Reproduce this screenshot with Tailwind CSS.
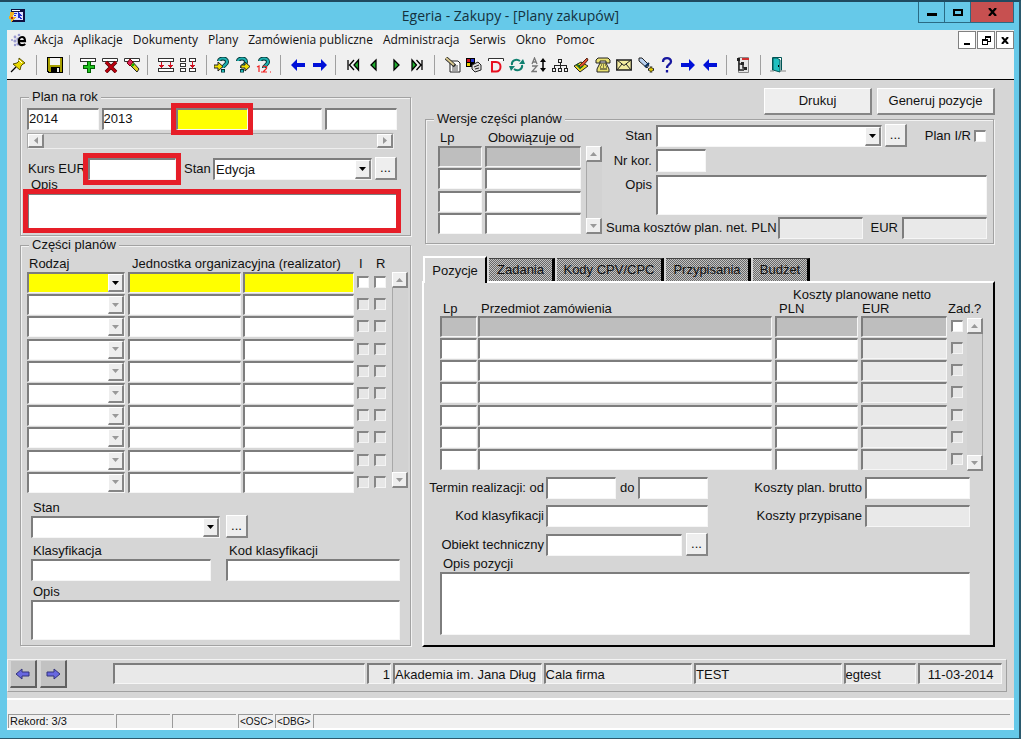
<!DOCTYPE html>
<html lang="pl">
<head>
<meta charset="utf-8">
<title>Egeria - Zakupy - [Plany zakupów]</title>
<script src="https://cdn.jsdelivr.net/npm/@tailwindcss/browser@4"></script>
</head>
<body class="min-h-screen bg-white pr-[2px] font-['Liberation_Sans',Arial,sans-serif] text-[13px]/4 text-[#111]
 [&_.fld]:block [&_.fld]:min-w-0 [&_.fld]:resize-none [&_.fld]:rounded-none [&_.fld]:border-t-2 [&_.fld]:border-l-2 [&_.fld]:border-r [&_.fld]:border-b [&_.fld]:border-t-[#7d7d7d] [&_.fld]:border-l-[#7d7d7d] [&_.fld]:border-r-[#f6f6f6] [&_.fld]:border-b-[#f6f6f6] [&_.fld]:outline-none
 [&_.btn]:flex [&_.btn]:items-center [&_.btn]:justify-center [&_.btn]:border-t [&_.btn]:border-l [&_.btn]:border-r-2 [&_.btn]:border-b-2 [&_.btn]:border-t-white [&_.btn]:border-l-white [&_.btn]:border-r-[#868686] [&_.btn]:border-b-[#868686] [&_.btn]:bg-[#eeeeee]
 [&_.chk]:block [&_.chk]:size-3 [&_.chk]:shrink-0 [&_.chk]:appearance-none [&_.chk]:border-t-2 [&_.chk]:border-l-2 [&_.chk]:border-r [&_.chk]:border-b [&_.chk]:border-t-[#868686] [&_.chk]:border-l-[#868686] [&_.chk]:border-r-[#f4f4f4] [&_.chk]:border-b-[#f4f4f4]
 [&_.sel]:relative [&_.sel]:min-w-0 [&_.sel_select]:w-full [&_.sel_select]:appearance-none [&_.sel_select]:bg-white [&_.arr]:pointer-events-none [&_.arr]:absolute [&_.arr]:top-[2px] [&_.arr]:right-px [&_.arr]:bottom-px [&_.arr]:w-4
 [&_.etch]:min-w-0 [&_.etch]:border [&_.etch]:border-[#a2a2a2] [&_.etch]:shadow-[1px_1px_0_#f2f2f2,inset_1px_1px_0_#f2f2f2]
 [&_.tb]:flex [&_.tb]:h-5 [&_.tb]:w-5 [&_.tb]:shrink-0 [&_.tb]:items-center [&_.tb]:justify-center
 [&_.sep]:h-5 [&_.sep]:w-px [&_.sep]:bg-[#a0a0a0]
 [&_th]:text-left [&_th]:font-normal [&_th]:whitespace-nowrap [&_td]:align-top">
<div class="flex min-h-screen flex-col border-t-2 border-r-2 border-b border-t-[#1f4a60] border-r-[#2b5a6e] border-b-[#2b5a6e] bg-[#66c9e9] pr-[5px] pb-2 pl-[7px]">

<header class="grid h-7 shrink-0 grid-cols-[1fr_auto_1fr] items-center font-['Open_Sans','Noto_Sans',sans-serif]">
  <svg class="ml-[2px] size-4" viewBox="0 0 16 16" shape-rendering="crispEdges"><path fill="#101040" d="M2 1h14v13H2z"/><path fill="#dde0ff" d="M4 4h10v8H4z"/><path fill="#fff" d="M3 2h8v1H3z"/><path fill="#2233cc" d="M9 4l4 4h-2l2 3h-2l-1-2-1 1zM5 5h3v1H5zM5 7h2v1H5z"/><path fill="#f0b020" d="M1 4h4v3H4v2h3L2 15v-4H0V8h1z"/><path fill="#b03020" d="M2 9h2v2H2z"/></svg>
  <h1 class="text-[14px]/5 whitespace-nowrap text-[#14323e]">Egeria - Zakupy - [Plany zakupów]</h1>
  <div class="flex self-start justify-self-end border-x border-b border-[#2a6a84]">
    <button aria-label="Minimalizuj" class="flex h-5 w-[26px] items-center justify-center border-r border-[#2a6a84]"><span class="mt-1 h-[3px] w-[10px] bg-black"></span></button>
    <button aria-label="Maksymalizuj" class="flex h-5 w-[26px] items-center justify-center border-r border-[#2a6a84]"><span class="h-[7px] w-[10px] border-2 border-black"></span></button>
    <button aria-label="Zamknij" class="flex h-5 w-[42px] items-center justify-center bg-[#c75050]"><svg class="h-2 w-[9px]" viewBox="0 0 9 8"><path d="M1 0l7 8M8 0L1 8" stroke="#000" stroke-width="2.2"/></svg></button>
  </div>
</header>

<div class="flex flex-1 flex-col bg-[#f0f0f0]">
<nav class="flex h-5 shrink-0 items-center pl-1 font-['Open_Sans','Noto_Sans',sans-serif] text-[12px]/5">
  <svg class="mr-[7px] h-4 w-4 shrink-0" viewBox="0 0 16 16"><g fill="#9a9ad0"><circle cx="1" cy="8" r="1"/><circle cx="4" cy="5" r="1.4"/><circle cx="4" cy="9" r="1.6"/><circle cx="4" cy="13" r="1.2"/><circle cx="8" cy="3" r="1.3"/><circle cx="7" cy="7" r="1.6"/><circle cx="7" cy="12" r="1.6"/></g><path d="M7.500 9.200h6.500C14 6.500 12.800 5 11 5S7.800 6.800 7.800 9.200s1.400 4 3.400 4c1.300 0 2.300-.5 2.900-1.300" fill="none" stroke="#000" stroke-width="2.200"/></svg>
  <div class="flex flex-1 gap-[10px]">
    <button>Akcja</button><button>Aplikacje</button><button>Dokumenty</button><button>Plany</button><button>Zamówienia publiczne</button><button>Administracja</button><button>Serwis</button><button>Okno</button><button>Pomoc</button>
  </div>
  <div class="flex gap-px [&_button]:flex [&_button]:size-[18px] [&_button]:items-center [&_button]:justify-center [&_button]:border [&_button]:border-[#808080] [&_button]:bg-white">
    <button aria-label="Minimalizuj okno"><span class="mt-2 h-[2px] w-[6px] bg-black"></span></button>
    <button aria-label="Przywróć okno"><svg class="size-[9px]" viewBox="0 0 9 9" shape-rendering="crispEdges"><path d="M3 0h6v6H6V5h2V2H4v1H3zM0 3h6v6H0zm1 2v3h4V5z" fill-rule="evenodd"/></svg></button>
    <button aria-label="Zamknij okno"><svg class="h-[7px] w-2" viewBox="0 0 8 7"><path d="M1 0l6 7M7 0L1 7" stroke="#000" stroke-width="2"/></svg></button>
  </div>
</nav>

<div role="toolbar" aria-label="Narzędzia" class="flex h-[30px] shrink-0 items-center border-b border-black pl-px [&_svg]:size-4">
  <button class="tb" aria-label="Przypnij"><svg viewBox="0 0 16 16"><path d="M1 15l5-5" stroke="#000" stroke-width="1.300"/><path d="M9 1l6 5-2 1-2 2-1 4-7-6 4-1 2-2z" fill="#e8d800" stroke="#5a5200"/><path d="M9 3l3 3" stroke="#fff"/></svg></button>
  <span class="sep mx-[8px]"></span>
  <button class="tb" aria-label="Zapisz"><svg viewBox="0 0 16 16" shape-rendering="crispEdges"><path d="M0 0h16v16H1L0 15z"/><path fill="#a8a000" d="M1 1h14v14H2V14H1z"/><path fill="#f4f4f4" d="M3 1h10v7H3z"/><path d="M4 10h9v6H4z"/><path fill="#eee" d="M10 11h2v4h-2z"/></svg></button>
  <span class="sep mr-[8px] ml-[4px]"></span>
  <div class="flex gap-[2px]">
    <button class="tb" aria-label="Dodaj rekord"><svg viewBox="0 0 16 16" shape-rendering="crispEdges"><path fill="#fff" stroke="#333" d="M.5 1.500h15v3H.5z"/><path fill="#006000" d="M7 4h4v4h4v4h-4v4H7v-4H3V8h4z"/><path fill="#20c020" d="M8 5h2v4h4v2h-4v4H8v-4H4V9h4z"/></svg></button>
    <button class="tb" aria-label="Usuń rekord"><svg viewBox="0 0 16 16"><path fill="#fff" stroke="#333" d="M.5 1.500h15v3H.5z"/><path d="M4 5l10 10M14 5L4 15" stroke="#500" stroke-width="3.600"/><path d="M4 5l10 10M14 5L4 15" stroke="#c00010" stroke-width="2"/></svg></button>
    <button class="tb" aria-label="Wyczyść rekord"><svg viewBox="0 0 16 16"><path fill="#fff" stroke="#333" d="M.5 1.500h15v3H.5z"/><path d="M4 6l3-3 8 9-2 3z" fill="#e0d020" stroke="#222"/><path d="M3 6l3-4 3 3-3 4z" fill="#e02060" stroke="#700"/><path d="M8 9l2-2" stroke="#0a0" stroke-width="2"/></svg></button>
  </div>
  <span class="sep mr-[8px] ml-[5px]"></span>
  <div class="flex gap-[2px]">
    <button class="tb" aria-label="Wstaw wiersze"><svg viewBox="0 0 16 16" shape-rendering="crispEdges"><path fill="#fff" stroke="#333" d="M.5 1.500h15v3H.5zM.5 11.500h15v3H.5z"/><path fill="#d01020" d="M3 5h1v6H3zM12 5h1v6h-1zM1 8h5v1H1zM2 9h3v1H2zM10 8h5v1h-5zM11 9h3v1h-3z"/></svg></button>
    <button class="tb" aria-label="Kopiuj pole"><svg viewBox="0 0 16 16" shape-rendering="crispEdges"><path fill="#fff" stroke="#333" d="M.5 1.500h5v3h-5zM9.500 1.500h6v3h-6zM.5 11.500h5v3h-5zM9.500 11.500h6v3h-6zM.5 6.500h5v3h-5z"/><path fill="#d01020" d="M12 4h1v8h-1zM10 8h5v1h-5zM11 9h3v1h-3z"/></svg></button>
  </div>
  <span class="sep mr-[5px] ml-[8px]"></span>
  <div class="flex gap-px">
    <button class="tb" aria-label="Wprowadź zapytanie"><svg viewBox="0 0 16 16"><path d="M5 4c0-3 8-4 8 1 0 3-4 3-4 6M9 12v3.500" fill="none" stroke="#033" stroke-width="4"/><path d="M5 4c0-3 8-4 8 1 0 3-4 3-4 6M9 13v2" fill="none" stroke="#20b0b0" stroke-width="2.200"/><path d="M0 8h4V5l5 4.500L4 14v-3H0z" fill="#f0e000" stroke="#222"/></svg></button>
    <button class="tb" aria-label="Wykonaj zapytanie"><svg viewBox="0 0 16 16"><path d="M3 4c0-3 8-4 8 1 0 3-4 3-4 6M7 12v3.500" fill="none" stroke="#033" stroke-width="4"/><path d="M3 4c0-3 8-4 8 1 0 3-4 3-4 6M7 13v2" fill="none" stroke="#20b0b0" stroke-width="2.200"/><path d="M6 8h4V5l5 4.500L10 14v-3H6z" fill="#f0e000" stroke="#222"/></svg></button>
    <button class="tb" aria-label="Policz rekordy"><svg viewBox="0 0 16 16"><path d="M4 4c0-3 8-4 8 1 0 3-4 3-4 6" fill="none" stroke="#033" stroke-width="4"/><path d="M4 4c0-3 8-4 8 1 0 3-4 3-4 6" fill="none" stroke="#20b0b0" stroke-width="2.200"/><path d="M1 10l2-1v6M7 10c2-2 5 0 3 2l-3 3h4M5 15h1M14 15h1" fill="none" stroke="#f02020" stroke-width="1.200"/></svg></button>
  </div>
  <span class="sep mr-[7px] ml-[6px]"></span>
  <div class="flex gap-[2px]">
    <button class="tb" aria-label="Poprzedni blok"><svg viewBox="0 0 16 16"><path d="M1 8l6-6v4h8v4H7v4z" fill="#0010d8"/></svg></button>
    <button class="tb" aria-label="Następny blok"><svg viewBox="0 0 16 16"><path d="M15 8L9 2v4H1v4h8v4z" fill="#0010d8"/></svg></button>
  </div>
  <span class="sep mr-[7px] ml-[5px]"></span>
  <div class="flex w-[84px] justify-between">
    <button class="tb" aria-label="Pierwszy rekord"><svg viewBox="0 0 16 16"><path d="M3 3v10M9 3L4.500 8 9 13" fill="none" stroke="#000" stroke-width="1.300"/><path d="M13.500 3L9 8l4.500 5z" fill="#20b030" stroke="#000" stroke-width="1.300"/></svg></button>
    <button class="tb" aria-label="Poprzedni rekord"><svg viewBox="0 0 16 16"><path d="M10 3L5 8l5 5z" fill="#20b030" stroke="#000" stroke-width="1.300"/></svg></button>
    <button class="tb" aria-label="Następny rekord"><svg viewBox="0 0 16 16"><path d="M6 3l5 5-5 5z" fill="#20b030" stroke="#000" stroke-width="1.300"/></svg></button>
    <button class="tb" aria-label="Ostatni rekord"><svg viewBox="0 0 16 16"><path d="M13 3v10M7.500 3L12 8l-4.500 5" fill="none" stroke="#000" stroke-width="1.300"/><path d="M3 3l4.500 5L3 13z" fill="#20b030" stroke="#000" stroke-width="1.300"/></svg></button>
  </div>
  <span class="sep mr-[8px] ml-[7px]"></span>
  <div class="flex w-[277px] justify-between">
    <button class="tb" aria-label="Edytuj"><svg viewBox="0 0 16 16"><path d="M5 4h8l2 2v9H5z" fill="#fff" stroke="#222"/><path d="M7 9h6M7 11h6M7 13h6" stroke="#555"/><path d="M1 1l9 8" stroke="#222" stroke-width="3.600"/><path d="M1 1l8 7" stroke="#d8c890" stroke-width="2"/></svg></button>
    <button class="tb" aria-label="Lista wartości"><svg viewBox="0 0 16 16"><path d="M0 1h9v9H0z"/><path fill="#d01020" d="M1 2h3v3H1z"/><path fill="#2030d0" d="M5 2h3v3H5z"/><path fill="#e8d000" d="M1 6h3v3H1z"/><path d="M6 8l6-3 3 3v5l-6 2-3-3z" fill="#ddd" stroke="#222"/><path d="M8 10l5-2M9 12l4-1" stroke="#222"/></svg></button>
    <button class="tb" aria-label="Definicja"><svg viewBox="0 0 16 16"><path d="M.5 4V1.500h15V4" fill="#fff" stroke="#333"/><path d="M4 5h4c6 0 6 9.500 0 9.500H4z" fill="none" stroke="#e81020" stroke-width="2"/></svg></button>
    <button class="tb" aria-label="Odśwież"><svg viewBox="0 0 16 16"><path d="M3 8c-1-4 4-7 8-4M13 8c1 4-4 7-8 4" fill="none" stroke="#108070" stroke-width="2"/><path d="M10 7h6l-2-5zM6 9H0l2 5z" fill="#108070"/></svg></button>
    <button class="tb" aria-label="Sortuj"><svg viewBox="0 0 16 16"><path d="M1 7l2.500-6L6 7M2 5h3M1 9h5l-5 5.500h5" fill="none" stroke="#777" stroke-width="1.300"/><path d="M12 3v10" stroke="#000" stroke-width="1.500"/><path d="M12 1l3 4H9zM12 15l3-4H9z"/></svg></button>
    <button class="tb" aria-label="Struktura"><svg viewBox="0 0 16 16" shape-rendering="crispEdges"><path fill="none" stroke="#222" d="M6.500 2.500h3v3h-3zM.5 11.500h3v3h-3zM6.500 11.500h3v3h-3zM12.500 11.500h3v3h-3zM8.500 5v6M2.500 11V8.500h12V11"/></svg></button>
    <button class="tb" aria-label="Notatka"><svg viewBox="0 0 16 16"><path d="M1 9l7-4 7 4-8 6z" fill="#e8d820" stroke="#222"/><path d="M3 8l5 4" stroke="#555"/><path d="M6 9l8-8 1 2-7 8z" fill="#e05030" stroke="#521"/><path d="M4 7l3 4 3-2" fill="none" stroke="#107020" stroke-width="1.500"/></svg></button>
    <button class="tb" aria-label="Telefon"><svg viewBox="0 0 16 16"><path d="M1 6V3l2-2h10l2 2v3h-4V4H5v2z" fill="#e8e070" stroke="#222"/><path d="M5 6h6l3 6v3H2v-3z" fill="#e8e070" stroke="#222"/><path d="M6 8h1M8 8h1M10 8h1M5 10h1M8 10h1M11 10h1M5 12h7" stroke="#222"/></svg></button>
    <button class="tb" aria-label="Poczta"><svg viewBox="0 0 16 16"><path d="M.7 3h14.600v10H.7z" fill="#f4eca0" stroke="#222" stroke-width="1.300"/><path d="M1 3l7 5.500L15 3M1 13l5-6M15 13l-5-6" fill="none" stroke="#222"/></svg></button>
    <button class="tb" aria-label="Podświetl"><svg viewBox="0 0 16 16"><path d="M1 1l3 0 7 7-2 3-8-7z" fill="#b8d0f0" stroke="#222"/><path d="M7 10l4-4" stroke="#0a3060" stroke-width="2"/><path d="M13 9.500v6M10 12.500h6" stroke="#222" stroke-width="2.600"/><path d="M13 10.500v4M11 12.500h4" stroke="#e8d000" stroke-width="1.300"/></svg></button>
    <button class="tb" aria-label="Pomoc"><svg viewBox="0 0 16 16"><path d="M4 5c0-5 8-5 8-.5C12 7.500 8 7.500 8 11M8 13v2.500" fill="none" stroke="#1818a0" stroke-width="2.300"/></svg></button>
    <button class="tb" aria-label="Dalej"><svg viewBox="0 0 16 16"><path d="M15 8L9 2v4H1v4h8v4z" fill="#0010d8"/></svg></button>
    <button class="tb" aria-label="Wstecz"><svg viewBox="0 0 16 16"><path d="M1 8l6-6v4h8v4H7v4z" fill="#0010d8"/></svg></button>
  </div>
  <span class="sep mx-[6px]"></span>
  <button class="tb" aria-label="Raport"><svg viewBox="0 0 16 16"><path d="M3.500.5h10v15h-10z" fill="#e4e4e4" stroke="#888"/><path d="M7 1h7v2H7z" fill="#d03030"/><path d="M2 1h3v3H2zM6 5h3v3H6zM9 10h3v3H9z" fill="#222"/><path d="M4 4v9h5M4 7h4v4h2" fill="none" stroke="#222" stroke-width="1.500"/></svg></button>
  <span class="sep mr-[7px] ml-[7px]"></span>
  <button class="tb" aria-label="Wyjście"><svg viewBox="0 0 16 16"><path d="M2.500 13.500v-13h9v13" fill="#fff" stroke="#055"/><path d="M3 1h4l3 2v12l-7-2z" fill="#20c0c0" stroke="#055"/><path d="M0 14h4M10 14h6" stroke="#888"/><path d="M8 8h1v2H8z"/></svg></button>
</div>

<main class="grid flex-1 grid-cols-[minmax(0,391fr)_minmax(0,573fr)] gap-[11px] bg-[#d6d6d6] pt-2 pr-[19px] pb-3 pl-[13px]">
  <div class="pt-px">
    <fieldset class="etch pr-[13px] pb-[6px] pl-[6px]">
      <legend class="ml-[2px] bg-[#d6d6d6] px-[3px]">Plan na rok</legend>
      <div class="mt-[3px] grid grid-cols-5 gap-[3px]">
        <input aria-label="Rok 1" value="2014" class="fld h-[22px] w-full bg-white pb-[2px]">
        <input aria-label="Rok 2" value="2013" class="fld h-[22px] w-full bg-white pb-[2px]">
        <div class="relative"><input aria-label="Rok 3" class="fld h-[22px] w-full bg-[#ffff00]"><span class="pointer-events-none absolute -inset-x-[5px] -inset-y-[5px] z-10 border-[5px] border-[#e61e28]"></span></div>
        <input aria-label="Rok 4" class="fld h-[22px] w-full bg-white">
        <input aria-label="Rok 5" class="fld h-[22px] w-full bg-white">
      </div>
      <div class="mt-[3px] mr-[3px] flex h-4 justify-between border border-t-[#a8a8a8] border-r-[#eee] border-b-[#eee] border-l-[#a8a8a8]">
        <button aria-label="W lewo" class="btn w-4"><svg class="h-[7px] w-1" viewBox="0 0 4 7"><path d="M4 0v7L0 3.500z" fill="#999"/></svg></button>
        <button aria-label="W prawo" class="btn w-4"><svg class="h-[7px] w-1" viewBox="0 0 4 7"><path d="M0 0v7l4-3.500z" fill="#999"/></svg></button>
      </div>
      <div class="mt-2 flex h-[23px] items-center">
        <label for="kurs" class="w-[61px] shrink-0 pl-px whitespace-nowrap">Kurs EUR</label>
        <div class="relative w-[88px] shrink-0"><input id="kurs" class="fld h-[22px] w-full bg-white"><span class="pointer-events-none absolute -inset-x-[5px] -inset-y-[5px] z-10 border-[5px] border-[#e61e28]"></span></div>
        <label for="stan1" class="ml-2 w-[29px] shrink-0">Stan</label>
        <div class="sel flex-1"><select id="stan1" class="fld h-[22px] pt-[2px] pl-px"><option>Edycja</option></select><span class="arr btn"><svg class="h-1 w-[7px]" viewBox="0 0 7 4"><path d="M0 0h7L3.500 4z"/></svg></span></div>
        <button class="btn ml-[3px] h-[23px] w-[22px]" aria-label="Wybierz stan">...</button>
      </div>
      <label for="opis1" class="-mt-[3px] block pl-1">Opis</label>
      <div class="relative"><textarea id="opis1" class="fld h-9 w-full bg-white"></textarea><span class="pointer-events-none absolute -inset-x-[4px] -inset-y-[4px] z-10 border-[5px] border-[#e61e28]"></span></div>
    </fieldset>

    <fieldset class="etch mt-px pr-px pb-[5px] pl-[6px]">
      <legend class="ml-[2px] bg-[#d6d6d6] px-[3px]">Części planów</legend>
      <div class="mt-[3px] flex">
        <div class="min-w-0 flex-1"><table class="w-full table-fixed border-collapse">
          <colgroup><col class="w-[101px]"><col><col><col class="w-[17px]"><col class="w-[14px]"></colgroup>
          <thead><tr class="h-4"><th class="p-0 pl-[2px]">Rodzaj</th><th colspan="2" class="p-0 pl-1">Jednostka organizacyjna (realizator)</th><th class="p-0 pl-[2px]">I</th><th class="p-0 pl-[2px]">R</th></tr></thead>
          <tbody id="parts" class="h-[222px]"></tbody>
        </table></div>
        <div class="mt-4 mr-px ml-1 flex h-[216px] w-4 flex-col justify-between border-l border-[#a8a8a8] bg-[#d2d2d2]">
          <button aria-label="W górę" class="btn -ml-px h-4"><svg class="h-1 w-[7px]" viewBox="0 0 7 4"><path d="M0 4h7L3.500 0z" fill="#999"/></svg></button>
          <button aria-label="W dół" class="btn -ml-px h-4"><svg class="h-1 w-[7px]" viewBox="0 0 7 4"><path d="M0 0h7L3.500 4z" fill="#999"/></svg></button>
        </div>
      </div>
      <div class="mt-[6px] mr-[9px] ml-1">
        <label for="stan2" class="block pl-[2px]">Stan</label>
        <div class="-mt-px flex items-center">
          <div class="sel w-[189px]"><select id="stan2" class="fld h-[22px]"><option></option></select><span class="arr btn"><svg class="h-1 w-[7px]" viewBox="0 0 7 4"><path d="M0 0h7L3.500 4z"/></svg></span></div>
          <button class="btn ml-[6px] h-[23px] w-[22px]" aria-label="Wybierz stan części">...</button>
        </div>
        <div class="mt-[5px] grid grid-cols-[180fr_174fr] gap-[15px]">
          <div><label for="klas" class="block pl-[2px]">Klasyfikacja</label><input id="klas" class="fld h-[22px] w-full bg-white"></div>
          <div><label for="kodk" class="block pl-[3px]">Kod klasyfikacji</label><input id="kodk" class="fld h-[22px] w-full bg-white"></div>
        </div>
        <label for="opis2" class="mt-[3px] block pl-[2px]">Opis</label>
        <textarea id="opis2" class="fld h-10 w-full bg-white"></textarea>
      </div>
    </fieldset>
  </div>

  <div>
    <div class="flex justify-end gap-[5px]">
      <button class="btn h-[27px] w-[108px]">Drukuj</button>
      <button class="btn h-[27px] w-[118px]">Generuj pozycje</button>
    </div>
    <fieldset class="etch -mt-1 mr-px ml-[3px] pr-[6px] pb-1 pl-3">
      <legend class="-ml-[4px] bg-[#d6d6d6] px-[3px]">Wersje części planów</legend>
      <div class="-mt-[3px] flex">
        <table class="mt-[6px] w-[143px] shrink-0 table-fixed self-start border-collapse">
          <colgroup><col class="w-[47px]"><col></colgroup>
          <thead><tr class="h-4"><th class="p-0 pl-[2px]">Lp</th><th class="p-0 pl-[3px]">Obowiązuje od</th></tr></thead>
          <tbody id="versions" class="h-[89px]"></tbody>
        </table>
        <div class="mt-[22px] ml-[5px] flex h-[88px] w-4 shrink-0 flex-col justify-between border-l border-[#a8a8a8] bg-[#d2d2d2]">
          <button aria-label="W górę" class="btn -ml-px h-4"><svg class="h-1 w-[7px]" viewBox="0 0 7 4"><path d="M0 4h7L3.500 0z" fill="#999"/></svg></button>
          <button aria-label="W dół" class="btn -ml-px h-4"><svg class="h-1 w-[7px]" viewBox="0 0 7 4"><path d="M0 0h7L3.500 4z" fill="#999"/></svg></button>
        </div>
        <div class="ml-1 min-w-0 flex-1">
          <div class="flex h-[23px] items-center">
            <label for="stan3" class="w-12 shrink-0 pr-[2px] text-right">Stan</label>
            <div class="sel ml-[2px] flex-1"><select id="stan3" class="fld h-[22px]"><option></option></select><span class="arr btn"><svg class="h-1 w-[7px]" viewBox="0 0 7 4"><path d="M0 0h7L3.500 4z"/></svg></span></div>
            <button class="btn ml-[3px] h-[23px] w-[22px]" aria-label="Wybierz stan wersji">...</button>
            <label for="planir" class="ml-[18px] whitespace-nowrap">Plan I/R</label><input id="planir" type="checkbox" class="chk mr-px ml-[3px] bg-white">
          </div>
          <div class="mt-[2px] flex h-[23px] items-center"><label for="nrkor" class="w-12 shrink-0 pr-[2px] text-right whitespace-nowrap">Nr kor.</label><input id="nrkor" class="fld ml-[2px] h-[23px] w-[50px] bg-white"></div>
          <div class="mt-[3px] flex"><label for="opis3" class="mt-[2px] w-12 shrink-0 pr-[2px] text-right">Opis</label><textarea id="opis3" class="fld ml-[2px] h-10 flex-1 bg-white"></textarea></div>
          <div class="mt-[2px] flex items-center"><label for="sumpln" class="shrink-0 whitespace-nowrap">Suma kosztów plan. net. PLN</label><input id="sumpln" readonly class="fld ml-px h-[22px] flex-1 bg-[#e9e9e9]"><label for="sumeur" class="ml-2">EUR</label><input id="sumeur" readonly class="fld ml-1 h-[22px] flex-1 bg-[#e9e9e9]"></div>
        </div>
      </div>
    </fieldset>

    <div role="tablist" class="mt-3 ml-px flex items-end gap-[2px] [&_.tab]:h-[23px] [&_.tab]:border-t [&_.tab]:border-r-[3px] [&_.tab]:border-t-[#444] [&_.tab]:border-r-black [&_.tab]:bg-[repeating-conic-gradient(#686868_0_25%,#c4c4c4_0_50%)] [&_.tab]:bg-[length:2px_2px]">
      <button role="tab" aria-selected="true" class="relative z-10 -mb-[2px] h-[27px] w-[64px] border-t-2 border-r-2 border-l-2 border-t-white border-r-black border-l-white bg-[#d6d6d6]">Pozycje</button>
      <button role="tab" aria-selected="false" class="tab w-[66px]">Zadania</button>
      <button role="tab" aria-selected="false" class="tab w-[107px]">Kody CPV/CPC</button>
      <button role="tab" aria-selected="false" class="tab w-[85px]">Przypisania</button>
      <button role="tab" aria-selected="false" class="tab w-[57px]">Budżet</button>
    </div>
    <div role="tabpanel" class="border-2 border-t-white border-r-black border-b-black border-l-white pr-[10px] pb-[10px] pl-4">
      <div class="mt-[5px] flex">
        <div class="min-w-0 flex-1"><table class="w-full table-fixed border-collapse">
          <colgroup><col class="w-[38px]"><col><col class="w-[86px]"><col class="w-[87px]"><col class="w-[19px]"></colgroup>
          <thead>
            <tr class="h-[13px]"><th class="p-0"></th><th class="p-0"></th><th colspan="2" class="h-[13px] p-0 pl-[18px] leading-[13px]">Koszty planowane netto</th><th class="p-0"></th></tr>
            <tr class="h-[15px]"><th class="p-0 pl-[3px] leading-[15px]">Lp</th><th class="p-0 pl-[3px] leading-[15px]">Przedmiot zamówienia</th><th class="p-0 pl-1 leading-[15px]">PLN</th><th class="p-0 pl-px leading-[15px]">EUR</th><th class="p-0 leading-[15px]">Zad.?</th></tr>
          </thead>
          <tbody id="items" class="h-[155px]"></tbody>
        </table></div>
        <div class="mt-[30px] flex h-[153px] w-4 flex-col justify-between border-r border-[#a8a8a8] bg-[#d2d2d2]">
          <button aria-label="W górę" class="btn -mr-px h-4"><svg class="h-1 w-[7px]" viewBox="0 0 7 4"><path d="M0 4h7L3.500 0z" fill="#999"/></svg></button>
          <button aria-label="W dół" class="btn -mr-px h-4"><svg class="h-1 w-[7px]" viewBox="0 0 7 4"><path d="M0 0h7L3.500 4z" fill="#999"/></svg></button>
        </div>
      </div>
      <div class="mt-[6px] mr-[13px]">
        <div class="-ml-[14px] flex justify-between">
          <div class="grid grid-cols-[118px_162px] items-center gap-x-[2px] gap-y-[6px]">
            <label for="od" class="text-right whitespace-nowrap">Termin realizacji: od</label>
            <div class="flex items-center"><input id="od" class="fld h-[22px] w-[70px] bg-white"><label for="do" class="flex-1 pl-1">do</label><input id="do" class="fld h-[22px] w-[70px] bg-white"></div>
            <label for="kod2" class="text-right">Kod klasyfikacji</label><input id="kod2" class="fld h-[22px] w-full bg-white">
            <label for="obiekt" class="text-right whitespace-nowrap">Obiekt techniczny</label>
            <div class="flex items-center justify-between"><input id="obiekt" class="fld h-[22px] w-[136px] bg-white"><button class="btn h-[23px] w-[22px]" aria-label="Wybierz obiekt">...</button></div>
          </div>
          <div class="grid grid-cols-[auto_105px] content-start items-center gap-x-[3px] gap-y-[6px]">
            <label for="brutto" class="text-right whitespace-nowrap">Koszty plan. brutto</label><input id="brutto" class="fld h-[22px] w-full bg-white">
            <label for="przyp" class="text-right">Koszty przypisane</label><input id="przyp" readonly class="fld h-[22px] w-full bg-[#e9e9e9]">
          </div>
        </div>
        <label for="opisp" class="block pl-[3px]">Opis pozycji</label>
        <textarea id="opisp" class="fld h-[63px] w-full bg-white"></textarea>
      </div>
    </div>
  </div>
</main>

<section aria-label="Kontekst" class="shrink-0 bg-[#d6d6d6] pb-[6px]">
  <div class="mr-[7px] flex h-[33px] border border-t-[#f4f4f4] border-r-[#a0a0a0] border-b-[#a0a0a0] border-l-[#f4f4f4] pr-1 pl-[2px]">
    <button aria-label="Poprzedni" class="btn h-[28px] w-[27px] border-t-[#d6d6d6]! border-l-[#d6d6d6]! border-r-[#606060]! border-b-[#606060]! bg-[#c2c2c2]!"><svg class="size-4" viewBox="0 0 16 16"><path d="M1 8l6-5v3h7v4H7v3z" fill="#6868e0" stroke="#33337a"/></svg></button>
    <button aria-label="Następny" class="btn ml-[3px] h-[28px] w-[27px] border-t-[#d6d6d6]! border-l-[#d6d6d6]! border-r-[#606060]! border-b-[#606060]! bg-[#c2c2c2]!"><svg class="size-4" viewBox="0 0 16 16"><path d="M15 8L9 3v3H2v4h7v3z" fill="#6868e0" stroke="#33337a"/></svg></button>
    <div class="mt-[3px] ml-[46px] grid flex-1 grid-cols-[253fr_24fr_149fr_149fr_148fr_73fr_84fr] gap-[2px] [&_input]:h-[21px] [&_input]:w-full [&_input]:bg-[#e9e9e9]">
      <input aria-label="Opis kontekstu" readonly class="fld">
      <input aria-label="Numer firmy" readonly value="1" class="fld text-right">
      <input aria-label="Firma" readonly value="Akademia im. Jana Dług" class="fld">
      <input aria-label="Zakres" readonly value="Cala firma" class="fld">
      <input aria-label="Baza" readonly value="TEST" class="fld">
      <input aria-label="Użytkownik" readonly value="egtest" class="fld">
      <input aria-label="Data" readonly value="11-03-2014" class="fld text-center">
    </div>
  </div>
</section>
<footer class="shrink-0 border-t-2 border-b-2 border-t-white border-b-white pt-[14px] pr-1 pl-px text-[11px]/[13px]">
  <div class="flex h-[14px] gap-[2px] [&_span]:border-t [&_span]:border-l [&_span]:border-[#9a9a9a] [&_span]:pl-px [&_span]:whitespace-nowrap">
    <span class="w-[106px]">Rekord: 3/3</span><span class="w-[54px]"></span><span class="w-[64px]"></span><span class="w-[35px] text-[10px]">&lt;OSC&gt;</span><span class="w-[36px] text-[10px]">&lt;DBG&gt;</span><span class="flex-1"></span>
  </div>
</footer>
</div>
</div>

<script>
const input = (label, bg, gap) => `<td class="p-0 ${gap}"><input aria-label="${label}" class="fld h-[21px] w-full ${bg}"></td>`;
const check = (label, first) => `<input type="checkbox" aria-label="${label}" class="chk mt-1 ${first ? 'bg-white' : 'bg-[#e6e6e6]'}">`;
const rows = (id, count, row) => {
  document.getElementById(id).innerHTML = Array.from({ length: count }, (_, i) => `<tr>${row(i + 1, i === 0)}</tr>`).join('');
};
rows('parts', 10, (n, first) => `
  <td class="p-0 pr-[3px]"><div class="sel"><select aria-label="Rodzaj ${n}" class="fld h-[21px] ${first ? 'bg-[#ffff00]!' : ''}"><option></option></select>
  <span class="arr btn"><svg class="h-1 w-[7px] ${first ? 'text-black' : 'text-[#999]'}" viewBox="0 0 7 4"><path d="M0 0h7L3.500 4z" fill="currentColor"/></svg></span></div></td>
  ${input('Jednostka ' + n, first ? 'bg-[#ffff00]' : 'bg-white', 'pr-[2px]')}
  ${input('Nazwa jednostki ' + n, first ? 'bg-[#ffff00]' : 'bg-white', 'pr-[3px]')}
  <td class="p-0">${check('I ' + n, first)}</td><td class="p-0">${check('R ' + n, first)}</td>`);
rows('versions', 4, (n, first) =>
  input('Lp ' + n, first ? 'bg-[#bebebe]' : 'bg-white', 'pr-[3px]') +
  input('Obowiązuje od ' + n, first ? 'bg-[#bebebe]' : 'bg-white', 'pr-0'));
rows('items', 7, (n, first) => {
  const bg = first ? 'bg-[#bebebe]' : 'bg-white';
  return input('Lp pozycji ' + n, bg, 'pr-px') + input('Przedmiot ' + n, bg, 'pr-[3px]') +
    input('PLN ' + n, bg, 'pr-[3px]') + input('EUR ' + n, first ? 'bg-[#bebebe]' : 'bg-[#e9e9e9]', 'pr-px') +
    `<td class="p-0 pl-[3px]">${check('Zad. ' + n, first)}</td>`;
});
</script>
</body>
</html>
